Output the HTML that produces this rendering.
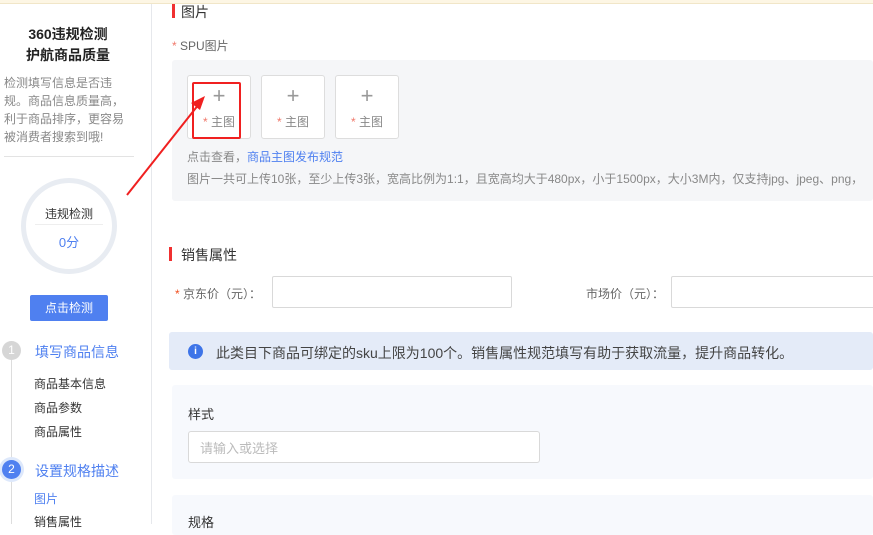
<!DOCTYPE html>
<html><head><meta charset="utf-8"><style>
*{margin:0;padding:0;box-sizing:border-box}
body{width:873px;height:524px;overflow:hidden;background:#fff;font-family:"Liberation Sans","Noto Sans CJK SC",sans-serif;position:relative;color:#333}
.a{position:absolute;white-space:nowrap}
.s{color:#f0796b}
</style></head><body>
<div class="a" style="left:0;top:0;width:873px;height:4px;background:#fdf6e4;border-bottom:1px solid #f1e6c8"></div>
<div class="a" style="left:151px;top:4px;width:1px;height:520px;background:#e6e8ec"></div>
<!-- sidebar -->
<div class="a" style="left:0;width:136px;top:24px;text-align:center;font-size:14px;font-weight:bold;line-height:21px;color:#222">360违规检测<br>护航商品质量</div>
<div class="a" style="left:4px;top:74px;font-size:12px;line-height:18px;color:#888;white-space:normal;width:130px">检测填写信息是否违规。商品信息质量高，利于商品排序，更容易被消费者搜索到哦!</div>
<div class="a" style="left:4px;top:156px;width:130px;height:1px;background:#e3e3e3"></div>
<div class="a" style="left:21px;top:178px;width:96px;height:96px;border:5px solid #e8ecf2;border-radius:50%"></div>
<div class="a" style="left:0;width:138px;top:205px;text-align:center;font-size:12px;color:#333">违规检测</div>
<div class="a" style="left:35px;top:224px;width:68px;height:1px;background:#eee"></div>
<div class="a" style="left:0;width:138px;top:232px;text-align:center;font-size:13px;color:#4f80f0">0分</div>
<div class="a" style="left:30px;top:295px;width:78px;height:26px;background:#4f80f0;border-radius:2px;color:#fff;font-size:12px;text-align:center;line-height:26px">点击检测</div>
<div class="a" style="left:11px;top:350px;width:1px;height:174px;background:#ddd"></div>
<div class="a" style="left:2px;top:341px;width:19px;height:19px;border-radius:50%;background:#d6d6d6;color:#fff;font-size:12px;text-align:center;line-height:19px">1</div>
<div class="a" style="left:35px;top:342px;font-size:14px;color:#4f80f0">填写商品信息</div>
<div class="a" style="left:34px;top:372px;font-size:12px;line-height:24px;color:#333">商品基本信息<br>商品参数<br>商品属性</div>
<div class="a" style="left:-1px;top:457px;width:25px;height:25px;border-radius:50%;background:#dde8fb"></div>
<div class="a" style="left:2px;top:460px;width:19px;height:19px;border-radius:50%;background:#4f80f0;color:#fff;font-size:12px;text-align:center;line-height:19px">2</div>
<div class="a" style="left:35px;top:461px;font-size:14px;color:#4f80f0">设置规格描述</div>
<div class="a" style="left:34px;top:490px;font-size:12px;color:#4f80f0">图片</div>
<div class="a" style="left:34px;top:513px;font-size:12px;color:#333">销售属性</div>
<!-- main -->
<div class="a" style="left:172px;top:4px;width:3px;height:14px;background:#f03030"></div>
<div class="a" style="left:181px;top:2px;font-size:14px;color:#333">图片</div>
<div class="a" style="left:172px;top:37px;font-size:12px;color:#666"><span class="s">*</span> SPU图片</div>
<div class="a" style="left:172px;top:60px;width:701px;height:141px;background:#f5f6f8;border-radius:3px"></div>
<div class="a" style="left:187px;top:75px;width:64px;height:64px;background:#fff;border:1px solid #ddd;border-radius:3px"></div>
<div class="a" style="left:261px;top:75px;width:64px;height:64px;background:#fff;border:1px solid #ddd;border-radius:3px"></div>
<div class="a" style="left:335px;top:75px;width:64px;height:64px;background:#fff;border:1px solid #ddd;border-radius:3px"></div>
<div class="a" style="left:187px;top:84px;width:64px;text-align:center;font-size:22px;color:#999;font-weight:300;line-height:24px">+</div>
<div class="a" style="left:261px;top:84px;width:64px;text-align:center;font-size:22px;color:#999;line-height:24px">+</div>
<div class="a" style="left:335px;top:84px;width:64px;text-align:center;font-size:22px;color:#999;line-height:24px">+</div>
<div class="a" style="left:187px;top:113px;width:64px;text-align:center;font-size:12px;color:#888"><span class="s">*</span> 主图</div>
<div class="a" style="left:261px;top:113px;width:64px;text-align:center;font-size:12px;color:#888"><span class="s">*</span> 主图</div>
<div class="a" style="left:335px;top:113px;width:64px;text-align:center;font-size:12px;color:#888"><span class="s">*</span> 主图</div>
<div class="a" style="left:192px;top:82px;width:49px;height:57px;border:2px solid #f02020;border-radius:2px"></div>
<svg class="a" style="left:0;top:0" width="873" height="524"><line x1="127" y1="195" x2="199" y2="104" stroke="#f02020" stroke-width="2"/><polygon points="205,96 191,103 200,110" fill="#f02020"/></svg>
<div class="a" style="left:187px;top:148px;font-size:12px;color:#888">点击查看，<span style="color:#4f80f0">商品主图发布规范</span></div>
<div class="a" style="left:187px;top:170px;font-size:12px;color:#888">图片一共可上传10张，至少上传3张，宽高比例为1:1，且宽高均大于480px，小于1500px，大小3M内，仅支持jpg、jpeg、png，</div>
<div class="a" style="left:169px;top:247px;width:3px;height:14px;background:#f03030"></div>
<div class="a" style="left:181px;top:245px;font-size:14px;color:#333">销售属性</div>
<div class="a" style="left:175px;top:285px;font-size:12px;color:#666"><span style="color:#f05020">*</span> 京东价（元）：</div>
<div class="a" style="left:272px;top:276px;width:240px;height:32px;border:1px solid #d9d9d9;border-radius:2px"></div>
<div class="a" style="left:586px;top:285px;font-size:12px;color:#666">市场价（元）：</div>
<div class="a" style="left:671px;top:276px;width:210px;height:32px;border:1px solid #d9d9d9;border-radius:2px"></div>
<div class="a" style="left:169px;top:332px;width:704px;height:38px;background:#e4ebf8;border-radius:3px"></div>
<div class="a" style="left:188px;top:344px;width:15px;height:15px;border-radius:50%;background:#3d74e8;color:#fff;font-size:10px;font-weight:bold;text-align:center;line-height:15px">i</div>
<div class="a" style="left:216px;top:343px;font-size:14px;color:#444">此类目下商品可绑定的sku上限为100个。销售属性规范填写有助于获取流量，提升商品转化。</div>
<div class="a" style="left:172px;top:385px;width:701px;height:94px;background:#f7f9fd;border-radius:3px"></div>
<div class="a" style="left:188px;top:404px;font-size:13px;color:#333">样式</div>
<div class="a" style="left:188px;top:431px;width:352px;height:32px;background:#fff;border:1px solid #d9d9d9;border-radius:3px"></div>
<div class="a" style="left:200px;top:438px;font-size:13px;color:#bbb">请输入或选择</div>
<div class="a" style="left:172px;top:495px;width:701px;height:40px;background:#f7f9fd;border-radius:3px"></div>
<div class="a" style="left:188px;top:512px;font-size:13px;color:#333">规格</div>
</body></html>
